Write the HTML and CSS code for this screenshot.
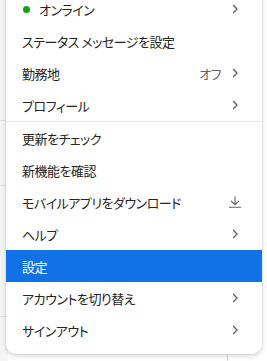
FILE: index.html
```html
<!DOCTYPE html>
<html lang="ja">
<head>
  <meta charset="UTF-8">
  <meta name="viewport" content="width=device-width, initial-scale=1.0">
  <title>Profile menu</title>
  <link rel="stylesheet" href="styles.css">
</head>
<body>
  <div class="backdrop">
    <div class="gutter">
      <div class="gutterRow" style="height: 120px"></div>
      <div class="gutterRow" style="height: 64px"></div>
      <div class="gutterRow" style="height: 130px"></div>
    </div>
    <div class="pageArea">
      <div class="pageLine"></div>
    </div>
  </div>

  <div class="menu">
    <div class="menuGroup">
      <div class="menuItem">
        <span class="statusDot"></span>
        <span class="label">オンライン</span>
        <svg class="chevron" width="12" height="12" viewBox="0 0 12 12"><path d="M4.2 2 L8 6 L4.2 10" fill="none" stroke="#616161" stroke-width="1.3"/></svg>
      </div>
      <div class="menuItem">
        <span class="label">ステータス メッセージを設定</span>
      </div>
      <div class="menuItem">
        <span class="label">勤務地</span>
        <span class="value">オフ</span>
        <svg class="chevron" width="12" height="12" viewBox="0 0 12 12"><path d="M4.2 2 L8 6 L4.2 10" fill="none" stroke="#616161" stroke-width="1.3"/></svg>
      </div>
      <div class="menuItem">
        <span class="label">プロフィール</span>
        <svg class="chevron" width="12" height="12" viewBox="0 0 12 12"><path d="M4.2 2 L8 6 L4.2 10" fill="none" stroke="#616161" stroke-width="1.3"/></svg>
      </div>
    </div>

    <div class="menuGroup">
      <div class="menuItem">
        <span class="label">更新をチェック</span>
      </div>
      <div class="menuItem">
        <span class="label">新機能を確認</span>
      </div>
      <div class="menuItem">
        <span class="label">モバイルアプリをダウンロード</span>
        <svg class="download" width="14" height="12" viewBox="0 0 14 12"><path d="M7 0.5 V8.5 M3 4.8 L7 8.7 L11 4.8 M1 11.3 H13" fill="none" stroke="#616161" stroke-width="1.1"/></svg>
      </div>
      <div class="menuItem">
        <span class="label">ヘルプ</span>
        <svg class="chevron" width="12" height="12" viewBox="0 0 12 12"><path d="M4.2 2 L8 6 L4.2 10" fill="none" stroke="#616161" stroke-width="1.3"/></svg>
      </div>
      <div class="menuItem selected">
        <span class="label">設定</span>
      </div>
      <div class="menuItem">
        <span class="label">アカウントを切り替え</span>
        <svg class="chevron" width="12" height="12" viewBox="0 0 12 12"><path d="M4.2 2 L8 6 L4.2 10" fill="none" stroke="#616161" stroke-width="1.3"/></svg>
      </div>
      <div class="menuItem">
        <span class="label">サインアウト</span>
        <svg class="chevron" width="12" height="12" viewBox="0 0 12 12"><path d="M4.2 2 L8 6 L4.2 10" fill="none" stroke="#616161" stroke-width="1.3"/></svg>
      </div>
    </div>
  </div>
</body>
</html>
```

FILE: styles.css
```css
body {
  margin: 0;
  width: 267px;
  height: 361px;
  overflow: hidden;
  background-color: #ffffff;
  font-family: "Noto Sans CJK JP", "Noto Sans", sans-serif;
  position: relative;
}

.backdrop {
  display: flex;
  height: 361px;
}

.gutter {
  width: 8px;
  background-color: #f5f5f5;
}

.gutterRow {
  border-bottom: 1px solid #e1e1e1;
}

.pageArea {
  flex: 1;
  display: flex;
  justify-content: flex-end;
  padding-right: 39px;
}

.pageLine {
  width: 1px;
  background-color: #dcdcdc;
}

.menu {
  position: absolute;
  left: 6px;
  top: -7px;
  width: 256px;
  background-color: #ffffff;
  border-radius: 0 0 10px 10px;
  box-shadow: 0 2px 5px rgba(0, 0, 0, 0.16), 0 0 2px rgba(0, 0, 0, 0.10);
  padding-bottom: 8px;
}

.menuGroup + .menuGroup {
  border-top: 1px solid #e6e6e6;
}

.menuItem {
  display: flex;
  align-items: center;
  height: 32px;
  padding: 0 21px 0 16px;
  font-size: 13px;
  color: #242424;
  font-feature-settings: "palt";
  letter-spacing: -0.5px;
}

.menuItem .label {
  flex: 1;
  white-space: nowrap;
}

.statusDot {
  width: 7px;
  height: 7px;
  border-radius: 50%;
  background-color: #13a10e;
  margin: 0 9px 0 1px;
}

.value {
  color: #616161;
  margin-right: 8px;
}

.chevron {
  display: block;
}

.download {
  display: block;
  margin-right: -1px;
}

.selected {
  background-color: #1172e8;
  color: #ffffff;
}
```
